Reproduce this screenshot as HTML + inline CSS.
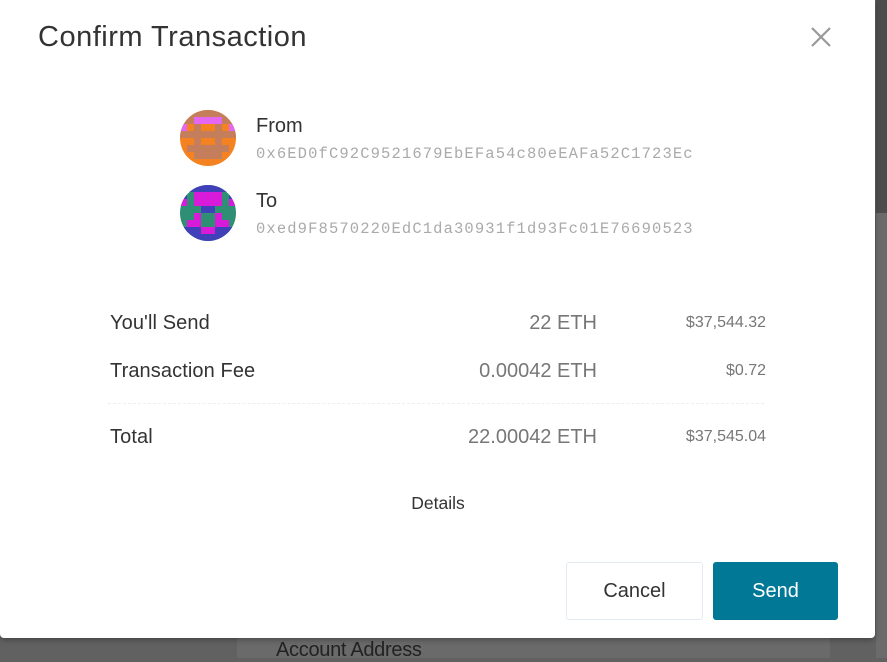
<!DOCTYPE html>
<html><head><style>
body{margin:0;width:887px;height:658px;background:#616161;position:relative;overflow:hidden;font-family:"Liberation Sans",sans-serif}
.strip{position:absolute;left:876px;top:0;width:11px;height:213px;background:#4d4d4d}
.strip2{position:absolute;left:876px;top:213px;width:11px;height:445px;background:#6b6b6b}
.panel2{position:absolute;left:237px;top:638px;width:593px;height:20px;background:#6a6a6a}
.acct{position:absolute;left:276px;top:639px;font-size:20px;color:#222;letter-spacing:-0.3px}
.modal{position:absolute;left:0;top:0;width:875px;height:638px;background:#fff;border-radius:0 0 4px 4px;box-shadow:0 2px 6px rgba(0,0,0,.3)}
.t{position:absolute;white-space:nowrap}
h1{position:absolute;left:38px;top:21px;margin:0;font-weight:normal;font-size:29px;color:#333;letter-spacing:0.5px}
.lab{font-size:20px;color:#333}
.addr{font-family:"Liberation Mono",monospace;font-size:15.5px;color:#aaa;letter-spacing:1.12px}
.row{font-size:20px;color:#333;letter-spacing:0.1px}
.eth{font-size:20px;color:#777;letter-spacing:0;text-align:right;width:300px}
.usd{font-size:16px;color:#777;letter-spacing:0;text-align:right;width:200px}
.btn{position:absolute;top:562px;height:58px;box-sizing:border-box;border-radius:3px;font-size:20px;display:flex;align-items:center;justify-content:center}
</style></head><body>
<div class="strip"></div><div class="strip2"></div>
<div class="panel2"></div>
<div class="acct">Account Address</div>
<div class="modal">
<h1>Confirm Transaction</h1>
<svg class="t" style="left:810px;top:26px" width="22" height="22" viewBox="0 0 22 22"><path d="M2 2L20 20M20 2L2 20" stroke="#999" stroke-width="2.2"/></svg>

<svg class="t" style="left:180px;top:110px" width="56" height="56" viewBox="0 0 8 8" shape-rendering="crispEdges">
<defs><clipPath id="c1"><circle cx="4" cy="4" r="4"/></clipPath></defs>
<g clip-path="url(#c1)">
<rect width="8" height="8" fill="#f58220"/>
<rect x="0" y="0" width="8" height="1" fill="#c47e5c"/>
<rect x="0" y="1" width="2" height="1" fill="#c47e5c"/><rect x="6" y="1" width="2" height="1" fill="#c47e5c"/>
<rect x="2" y="1" width="4" height="1" fill="#e566f0"/>
<rect x="0" y="2" width="1" height="1" fill="#e566f0"/><rect x="7" y="2" width="1" height="1" fill="#e566f0"/>
<rect x="2" y="2" width="1" height="1" fill="#c47e5c"/><rect x="5" y="2" width="1" height="1" fill="#c47e5c"/>
<rect x="0" y="3" width="8" height="1" fill="#c47e5c"/>
<rect x="2" y="4" width="1" height="1" fill="#c47e5c"/><rect x="5" y="4" width="1" height="1" fill="#c47e5c"/>
<rect x="1" y="5" width="6" height="1" fill="#c47e5c"/>
<rect x="2" y="6" width="4" height="1" fill="#c47e5c"/>
</g></svg>

<svg class="t" style="left:180px;top:185px" width="56" height="56" viewBox="0 0 8 8" shape-rendering="crispEdges">
<defs><clipPath id="c2"><circle cx="4" cy="4" r="4"/></clipPath></defs>
<g clip-path="url(#c2)">
<rect width="8" height="8" fill="#2e8f74"/>
<rect x="0" y="0" width="8" height="1" fill="#4040b8"/>
<rect x="0" y="1" width="1" height="1" fill="#4040b8"/><rect x="7" y="1" width="1" height="1" fill="#4040b8"/>
<rect x="2" y="1" width="4" height="2" fill="#d81bd8"/>
<rect x="0" y="2" width="1" height="1" fill="#d81bd8"/><rect x="7" y="2" width="1" height="1" fill="#d81bd8"/>
<rect x="3" y="3" width="2" height="1" fill="#4040b8"/>
<rect x="2" y="4" width="1" height="1" fill="#d81bd8"/><rect x="5" y="4" width="1" height="1" fill="#d81bd8"/>
<rect x="1" y="5" width="2" height="1" fill="#d81bd8"/><rect x="5" y="5" width="2" height="1" fill="#d81bd8"/>
<rect x="0" y="6" width="3" height="2" fill="#4040b8"/><rect x="5" y="6" width="3" height="2" fill="#4040b8"/>
<rect x="3" y="6" width="2" height="1" fill="#d81bd8"/>
<rect x="3" y="7" width="2" height="1" fill="#4040b8"/>
</g></svg>

<div class="t lab" style="left:256px;top:115px">From</div>
<div class="t addr" style="left:256px;top:145px">0x6ED0fC92C9521679EbEFa54c80eEAFa52C1723Ec</div>
<div class="t lab" style="left:256px;top:190px">To</div>
<div class="t addr" style="left:256px;top:220px">0xed9F8570220EdC1da30931f1d93Fc01E76690523</div>

<div class="t row" style="left:110px;top:312px">You'll Send</div>
<div class="t eth" style="left:297px;top:312px">22 ETH</div>
<div class="t usd" style="left:566px;top:314px">$37,544.32</div>
<div class="t row" style="left:110px;top:360px">Transaction Fee</div>
<div class="t eth" style="left:297px;top:360px">0.00042 ETH</div>
<div class="t usd" style="left:566px;top:362px">$0.72</div>
<div class="t" style="left:108px;top:403px;width:656px;border-top:1px dashed #eee"></div>
<div class="t row" style="left:110px;top:426px">Total</div>
<div class="t eth" style="left:297px;top:426px">22.00042 ETH</div>
<div class="t usd" style="left:566px;top:428px">$37,545.04</div>

<div class="t" style="left:338px;width:200px;text-align:center;top:493px;font-size:17.5px;color:#333">Details</div>

<div class="btn" style="left:566px;width:137px;border:1px solid #e3eaf2;color:#333">Cancel</div>
<div class="btn" style="left:713px;width:125px;background:#007896;color:#fff">Send</div>
</div>
</body></html>
